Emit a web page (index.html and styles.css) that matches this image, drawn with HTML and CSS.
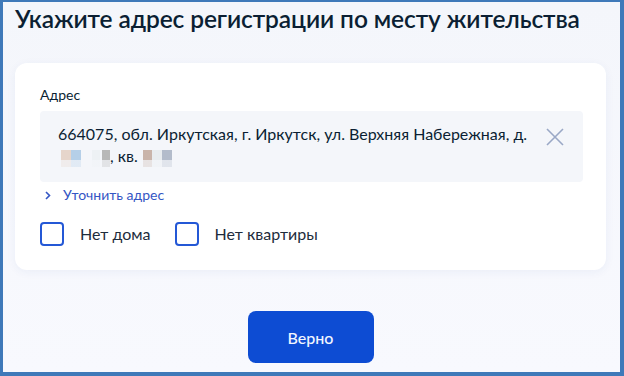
FILE: index.html
```html
<!DOCTYPE html>
<html>
    <link rel="stylesheet" href="styles.css">
    <head>
        <title>Адрес регистрации</title>
    </head>
    <body>
        <div class="frame">
            <h1 class="title">Укажите адрес регистрации по месту жительства</h1>
            <div class="card">
                <div class="field-label">Адрес</div>
                <div class="address-box">
                    <div class="address-text">664075, обл. Иркутская, г. Иркутск, ул. Верхняя Набережная, д. <span class="blur blur-house"></span>, кв. <span class="blur blur-flat"></span></div>
                    <button class="clear-button" aria-label="Очистить">
                        <svg width="18" height="18" viewBox="0 0 18 18">
                            <path d="M1 1L17 17M17 1L1 17" stroke="#9aa8c6" stroke-width="1.6" fill="none"/>
                        </svg>
                    </button>
                </div>
                <a class="refine-link" href="#">
                    <svg width="6" height="9" viewBox="0 0 6 9">
                        <path d="M1 1l3.5 3.5L1 8" stroke="#3456c4" stroke-width="1.6" fill="none"/>
                    </svg>
                    Уточнить адрес
                </a>
                <div class="checks">
                    <label class="check"><span class="check-box"></span>Нет дома</label>
                    <label class="check"><span class="check-box"></span>Нет квартиры</label>
                </div>
            </div>
            <div class="actions">
                <button class="main-button">Верно</button>
            </div>
        </div>
    </body>
</html>
```

FILE: styles.css
```css
body {
    margin: 0;
    font-family: Lato, "Noto Sans", sans-serif;
    color: #0b1f33;
}
.frame {
    height: 376px;
    box-sizing: border-box;
    border-style: solid;
    border-color: #3f79b9;
    border-width: 2px 4px 4px 3px;
    padding: 1px 14px 0 12px;
    background: linear-gradient(to bottom, #f4f6fb, #f8f9fe);
}
.title {
    margin: 0 0 28px 0;
    font-size: 24.5px;
    line-height: 32px;
    font-weight: 600;
    letter-spacing: -0.1px;
}
.card {
    background-color: white;
    border-radius: 12px;
    padding: 22px 23px 24px 25px;
    box-shadow: 0 2px 10px rgba(30, 70, 150, 0.06);
}
.field-label {
    font-size: 14px;
    line-height: 20px;
    margin-bottom: 6px;
}
.address-box {
    display: flex;
    align-items: flex-start;
    background-color: #f4f6fa;
    border-radius: 4px;
    padding: 12px 19px 15px 18px;
}
.address-text {
    flex: 1;
    font-size: 16px;
    line-height: 22px;
    padding-right: 14px;
}
.blur {
    display: inline-block;
    height: 17px;
    vertical-align: -5px;
}
.blur-house {
    width: 49px;
    margin-left: 3px;
    background:
        linear-gradient(to bottom, transparent 10px, rgba(244, 246, 250, 0.7) 10px),
        linear-gradient(to right, #e6d5cb 0 10px, #b5cfe8 10px 20px, transparent 20px 31px, #edf1f4 31px 39px, transparent 39px 41px, #b8b8b8 41px 49px);
}
.blur-flat {
    width: 29px;
    margin-left: 1px;
    background:
        linear-gradient(to bottom, transparent 10px, rgba(244, 246, 250, 0.7) 10px),
        linear-gradient(to right, #c9b4aa 0 9px, #e8ecef 9px 19px, #b3bccb 19px 28px);
}
.clear-button {
    margin-top: 5px;
    padding: 0;
    border: none;
    background: none;
    width: 18px;
    height: 18px;
}
.refine-link {
    display: flex;
    align-items: center;
    gap: 12px;
    margin-top: 3px;
    padding-left: 5px;
    font-size: 14px;
    line-height: 20px;
    color: #3456c4;
    text-decoration: none;
}
.checks {
    display: flex;
    gap: 24px;
    margin-top: 17px;
}
.check {
    display: flex;
    align-items: center;
    gap: 16px;
    font-size: 16px;
    line-height: 24px;
    color: #1e2c3c;
}
.check-box {
    width: 24px;
    height: 24px;
    box-sizing: border-box;
    border: 2px solid #2458d6;
    border-radius: 4px;
}
.actions {
    display: flex;
    justify-content: center;
    margin-top: 41px;
}
.main-button {
    width: 126px;
    height: 52px;
    border: none;
    border-radius: 8px;
    background-color: #0d4cd3;
    color: #f2f6ff;
    font-family: Lato, "Noto Sans", sans-serif;
    font-size: 16px;
    font-weight: 500;
}
```
